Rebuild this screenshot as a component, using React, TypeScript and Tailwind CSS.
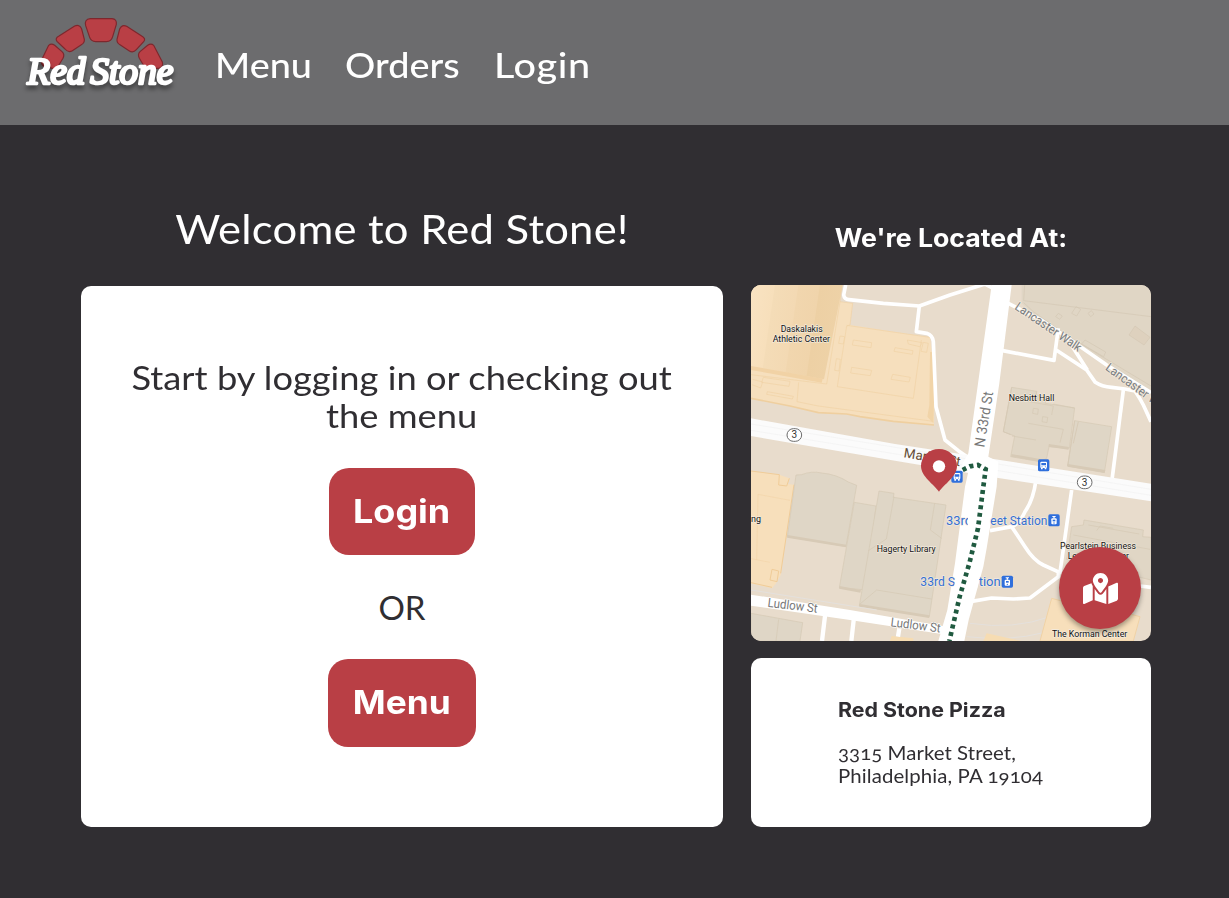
import { FaMapMarkedAlt } from 'react-icons/fa';

type LabelProps = {
  x: number;
  y: number;
  w: number;
  children: string;
  size?: number;
  color?: string;
  halo?: string;
  rotate?: number;
};

function Label({ x, y, w, children, size = 27, color = '#111111', halo = '#f3ebdf', rotate = 0 }: LabelProps) {
  return (
    <text
      x={x}
      y={y}
      textLength={w}
      lengthAdjust="spacingAndGlyphs"
      fontSize={size}
      fill={color}
      stroke={halo}
      strokeWidth={4}
      strokeLinejoin="round"
      paintOrder="stroke"
      transform={`rotate(${rotate} ${x} ${y})`}
    >
      {children}
    </text>
  );
}

function StationBadge({ x, y, tram = false }: { x: number; y: number; tram?: boolean }) {
  return (
    <g transform={`translate(${x} ${y})`}>
      <rect x="-17" y="-18" width="34" height="36" rx="5" fill="#2f6fdc" />
      {tram ? (
        <g fill="#fff">
          <path d="M-5 -13h10v3H2v4h-4v-4h-3z" />
          <rect x="-8" y="-6" width="16" height="18" rx="3" />
          <rect x="-4" y="-2" width="8" height="5" fill="#2f6fdc" />
          <circle cy="8" r="2" fill="#2f6fdc" />
        </g>
      ) : (
        <g fill="#fff">
          <rect x="-10" y="-11" width="20" height="19" rx="3" />
          <path d="M-8 7h5v5h-5zM3 7h5v5H3z" />
          <path d="M-7 -7H7V0H-7z" fill="#2f6fdc" />
          <circle cx="-5" cy="4" r="1.6" fill="#2f6fdc" />
          <circle cx="5" cy="4" r="1.6" fill="#2f6fdc" />
        </g>
      )}
    </g>
  );
}

function RouteShield({ x, y }: { x: number; y: number }) {
  return (
    <g>
      <rect x={x - 22} y={y - 19} width="44" height="38" rx="19" fill="#fff" stroke="#6c6c6c" strokeWidth="3" />
      <text x={x} y={y + 10} textAnchor="middle" fontSize="30" fill="#333">
        3
      </text>
    </g>
  );
}

function StreetMap() {
  return (
    <svg viewBox="3 15 1200 1068" className="block h-full w-full font-['Roboto',sans-serif]">
      <defs>
        <linearGradient id="gym" x1="0" x2="1" y1="0" y2="0.15">
          <stop offset="0" stopColor="#f9e3c2" />
          <stop offset="0.25" stopColor="#f7dfbb" />
          <stop offset="0.26" stopColor="#f4dcb7" />
          <stop offset="0.5" stopColor="#f3d9b3" />
          <stop offset="0.51" stopColor="#f1d6ae" />
          <stop offset="0.73" stopColor="#f0d4ab" />
          <stop offset="0.74" stopColor="#edd0a4" />
          <stop offset="1" stopColor="#eed2a7" />
        </linearGradient>
      </defs>
      <rect x="3" y="15" width="1200" height="1068" fill="#e8dccc" />

      {/* north-east block */}
      <path d="M815 15H1203V330L1140 295L1060 240L960 180L850 100L815 70Z" fill="#e0d6c5" />
      <g fill="none" stroke="#d3c7b4" strokeWidth="2">
        <path d="M824 15L821 62L1203 110M821 68L850 95L960 172L1060 232L1203 318" />
        <path d="M978 80l14 8l-12 20l-15-8zM925 100l12 8l-8 10l-12-8zM1024 92l8 10l-10 8l-8-10z" />
        <path d="M1005 180l62 36l-6 14l-66-38z" />
      </g>
      <path d="M1155 138L1200 172L1182 195L1137 165Z" fill="#ded1be" stroke="#d3c7b4" strokeWidth="2" />

      {/* athletic center */}
      <path d="M3 15H275L270 65L308 70L300 135L540 172L545 212L556 215L552 435L430 424L330 410L290 402L205 398L120 378L3 355Z" fill="#f6dfbd" />
      <path d="M3 355L120 378L205 398L290 402L330 410L430 424L552 435" fill="none" stroke="#efcf9f" strokeWidth="5" />
      <path d="M3 15H278L222 298L3 260Z" fill="url(#gym)" />
      <path d="M3 258L218 296L215 308L3 270Z" fill="#f1d2a5" />
      <g fill="none" stroke="#f0d2a5" strokeWidth="2">
        <path d="M275 15L270 65L230 312L3 284M270 65L308 70L300 135L290 138L262 320L490 355L514 180M290 136L540 172M146 307L141 365L205 378L550 424" />
        <path d="M310 180l55 8l-2 15l-56-8zM435 203l54 9l-2 11l-55-9zM305 262l60 9l-4 16l-59-8zM428 283l53 9l-4 14l-54-8z" />
        <path d="M270 168l14 2l-4 22l-14-2zM259 236l12 2l-4 35l-13-2zM472 180l45 8l-8 12l-34-8zM520 187l15 3l-5 27l-17-3z" />
        <path d="M40 292l80 12l-3 15l-82-12zM52 335l78 14l-3 8l-77-14zM8 298l30 8l-6 18l-26-10" />
      </g>
      <path d="M540 216L538 375L532 410L550 430L556 215Z" fill="#f1d4a8" />

      {/* west building */}
      <path d="M3 573L88 584L118 595L114 612L132 614L92 885L78 910L66 925L3 910Z" fill="#f7dfbb" />
      <g fill="none" stroke="#f0cc98" strokeWidth="3">
        <path d="M3 573L88 584L86 615L110 618L118 595M132 614L92 880M66 922L3 908M66 868l20 5l-5 32l-21-5z" />
        <path d="M24 643L20 840M24 643L120 661M3 836L60 847" strokeWidth="1" />
      </g>

      {/* grey campus buildings */}
      <g stroke="#d5c8b4" strokeWidth="2">
        <path d="M138 585L155 584Q185 572 215 579Q260 583 295 606L320 616L288 799L112 770Z" fill="#dfd6c6" />
        <path d="M313 667L378 678L350 930L268 923Z" fill="#dfd6c6" />
        <path d="M387 633L432 640L430 652L588 675L538 1010L328 977Z" fill="#dfd6c6" />
        <path d="M432 650L409 777L355 812M330 972L380 930L545 957M554 670L541 750L575 775" fill="none" />
        <path d="M785 322L860 334L858 345L888 350L886 370L974 384L958 505L897 500L890 535L870 545L782 530L794 468L760 455Z" fill="#e0d6c5" />
        <path d="M822 362L910 378L905 405M850 385l15 2l-2 16l-15-3zM878 410l15 2l-2 16l-15-3zM835 430L940 448L930 488M786 468L858 480M910 372L974 384" fill="none" />
        <path d="M974 422L1085 440L1063 578L953 558Z" fill="#dfd6c6" />
        <path d="M965 740L1000 735L1002 720L1180 750L1178 770L1203 772V900L950 838Z" fill="#e0d6c5" />
        <path d="M1015 735L1168 762M1040 752L1050 738L1090 745M970 765L1200 808" fill="none" />
        <path d="M3 1000L158 1028L150 1083H3ZM86 1018L78 1083" fill="#dfd6c6" />
      </g>
      <g fill="none" stroke="#d7cab6" strokeWidth="8">
        <path d="M112 769L288 798M268 922L332 934M328 976L538 1010M784 526L870 541M896 496L956 505M953 556L1065 574M955 836L1060 865" />
      </g>
      <path d="M785 322L760 455L782 464M860 334L858 362M974 422L965 480L953 558M985 425L970 490" fill="none" stroke="#d7cab6" strokeWidth="3" />

      {/* foot paths */}
      <g fill="none" stroke="#fff" strokeWidth="11" strokeLinejoin="round">
        <path d="M287 15L281 45Q283 58 297 59L400 70L508 78L600 45L705 12L740 30" />
        <path d="M508 78L499 155L530 160Q548 166 550 185L558 380L585 480L625 512L665 540" />
        <path d="M758 212L912 241L925 145M914 207L1010 270L1036 307Q1055 320 1085 322L1125 327L1155 333Q1170 355 1180 375L1203 425" />
        <path d="M945 165L1012 270M775 70L870 118L955 175L1070 255L1203 338" />
        <path d="M1120 330L1086 600" />
        <path d="M858 600Q850 660 825 695Q808 732 785 740L720 752M785 740L825 800Q850 840 880 855L930 878L965 630M925 878L925 890L840 954L790 957L725 954L665 964M1170 918L1203 922" />
      </g>
      <g fill="none" stroke="#e4e0dc" strokeWidth="3">
        <path d="M660 1030Q790 1050 900 1010L930 1000M650 1070Q780 1085 880 1058M3 930L380 990" />
      </g>
      <path d="M905 955L935 963L945 950L1170 1010L1150 1083H870Z" fill="#f7dfbb" stroke="#f0d2a5" strokeWidth="3" />
      <path d="M710 1060L815 1083H700ZM425 1068L490 1075V1083H420Z" fill="#f6dcb2" />

      {/* streets */}
      <path d="M3 415L435 492L745 539L1203 611V664L745 594L435 542L3 468Z" fill="#fbfbfb" />
      <path d="M3 432L640 535L1203 628M3 451L640 555L1203 646" fill="none" stroke="#f1f1f1" strokeWidth="2" />
      <path d="M3 944L300 990L590 1040V1064L300 1020L3 977Z" fill="#fff" />
      <path d="M226 1000L216 1083M312 1012L304 1083M448 1045L444 1070" stroke="#fff" strokeWidth="13" />
      <Label x={460} y={532} w={172} size={40} rotate={9} color="#654d36" halo="#fbfbfb">Market St</Label>
      <path d="M725 15H785L748 310L715 530L745 545L740 620L710 805L700 860L656 1020L643 1083H565L592 990L615 850L645 620L655 575L632 575L638 550L655 520Z" fill="#fff" />

      <Label x={92} y={157} w={126}>Daskalakis</Label>
      <Label x={68} y={186} w={172}>Athletic Center</Label>
      <Label x={776} y={363} w={137}>Nesbitt Hall</Label>
      <Label x={380} y={817} w={177}>Hagerty Library</Label>
      <Label x={3} y={727} w={30}>ng</Label>
      <Label x={930} y={808} w={228}>Pearlstein Business</Label>
      <Label x={953} y={837} w={184}>Learning Center</Label>
      <Label x={906} y={1070} w={226}>The Korman Center</Label>
      <Label x={703} y={503} w={168} size={43} rotate={-81} color="#777777" halo="#ffffff">N 33rd St</Label>
      <Label x={792} y={86} w={232} size={37} rotate={34} color="#777b80">Lancaster Walk</Label>
      <Label x={1064} y={268} w={232} size={37} rotate={36} color="#777b80">Lancaster Walk</Label>
      <Label x={52} y={980} w={150} size={38} rotate={7} color="#777777" halo="#ffffff">Ludlow St</Label>
      <Label x={421} y={1039} w={150} size={38} rotate={7} color="#777777" halo="#ffffff">Ludlow St</Label>
      <Label x={588} y={735} w={78} size={41} color="#356fd2">33rd</Label>
      <Label x={721} y={735} w={171} size={41} color="#356fd2">eet Station</Label>
      <Label x={511} y={918} w={104} size={41} color="#356fd2">33rd S</Label>
      <Label x={686} y={918} w={66} size={41} color="#356fd2">tion</Label>
      <path d="M655 690H722L707 805L675 760H652ZM622 875H693L680 930H610Z" fill="#fff" />

      <RouteShield x={133} y={465} />
      <RouteShield x={1004} y={607} />
      <StationBadge x={881} y={556} />
      <StationBadge x={621} y={590} />
      <StationBadge x={912} y={721} tram />
      <StationBadge x={772} y={905} tram />

      {/* walking route */}
      <path
        d="M638 570L660 559L684 555L707 568L700 620L684 745L658 850L629 950L598 1083"
        fill="none"
        stroke="#205a40"
        strokeWidth="14"
        strokeDasharray="12 11"
      />

      <path d="M567 635C552 613 513 590 513 558A54 51 0 0 1 621 558C621 590 582 613 567 635Z" fill="#b93f45" />
      <circle cx="567" cy="559" r="18.5" fill="#fff" />
    </svg>
  );
}

function Logo() {
  return (
    <svg viewBox="0 0 570 360" className="mt-[5px] block h-[120px] w-[190px] shrink-0">
      <g fill="#b93f45" stroke="#7e272d" strokeWidth="3.5">
        <path d="M241 41H306Q321 42 319 58L308 95Q304 110 289 110H257Q243 109 239 97L227 62Q222 43 241 41Z" />
        <path d="M147 93L194 63Q209 57 215 72L223 103Q224 114 214 119L187 137Q175 144 165 132L141 109Q134 100 147 93Z" />
        <path d="M395 93L350 64Q336 57 329 72L321 103Q320 114 330 119L357 137Q369 145 379 134L401 110Q409 101 395 93Z" />
        <path d="M116 121Q124 114 134 121L156 140Q165 148 159 160L143 186Q138 193 127 190L103 185Q91 178 95 164Z" />
        <path d="M431 121Q423 114 413 121L390 140Q382 148 388 160L402 183Q407 190 418 190H447Q461 185 457 171Z" />
      </g>
      <text
        x="52"
        y="236"
        textLength="438"
        lengthAdjust="spacingAndGlyphs"
        fontSize="112"
        fontStyle="italic"
        wordSpacing="-14"
        fill="#fff"
        stroke="#fff"
        strokeWidth="8"
        strokeLinejoin="round"
        className="font-['Liberation_Serif',serif] drop-shadow-[0_12px_6px_rgba(0,0,0,0.4)]"
      >
        Red Stone
      </text>
    </svg>
  );
}

export default function App() {
  return (
    <div className="flex h-[898px] w-full flex-col overflow-hidden bg-[#302e32] font-['Lato',sans-serif]">
      <header className="flex h-[125px] shrink-0 items-center bg-[#6c6c6e] pl-[10px] text-white">
        <Logo />
        <nav className="flex items-center pt-[3px] pl-[15px] text-[35px] leading-[42px] font-medium">
          <a href="#menu" className="w-[130px] origin-left scale-x-[1.08]">Menu</a>
          <a href="#orders" className="w-[149px] origin-left scale-x-[1.08]">Orders</a>
          <a href="#login" className="origin-left scale-x-[1.13] tracking-[0.5px]">Login</a>
        </nav>
      </header>

      <main className="flex gap-7 pl-[81px]">
        <section className="flex w-[642px] flex-col">
          <h1 className="flex h-[161px] scale-x-[1.09] items-end justify-center pb-[32px] text-[40px] leading-[50px] tracking-[0.2px] text-white">
            Welcome to Red Stone!
          </h1>
          <div className="flex h-[541px] flex-col items-center rounded-[10px] bg-white pt-[72px] text-[#302e32]">
            <p className="scale-x-[1.1] text-center text-[33px] leading-[38px]">
              Start by logging in or checking out
              <br />
              the menu
            </p>
            <button className="mt-[34px] flex h-[87px] w-[146px] items-center justify-center rounded-[20px] bg-[#b93f45] pt-px font-['Inter',sans-serif] text-[33px] font-bold text-white">
              <span className="scale-x-[1.09]">Login</span>
            </button>
            <p className="my-[33px] text-[33px] leading-[38px]">OR</p>
            <button className="flex h-[88px] w-[148px] items-center justify-center rounded-[20px] bg-[#b93f45] font-['Inter',sans-serif] text-[33px] font-bold text-white">
              <span className="scale-x-[1.07]">Menu</span>
            </button>
          </div>
        </section>

        <section className="flex w-[400px] flex-col">
          <h2 className="flex h-[160px] scale-x-[1.067] items-end justify-center pb-[32px] font-['Inter',sans-serif] text-[25px] leading-[30px] font-bold text-white">
            We're Located At:
          </h2>
          <div className="relative h-[356px] overflow-hidden rounded-[10px]">
            <StreetMap />
            <button
              aria-label="Open map"
              className="absolute right-[10px] bottom-[12px] flex h-[82px] w-[82px] items-center justify-center rounded-full bg-[#b93f45] text-[35px] text-white shadow-[0_3px_5px_rgba(0,0,0,0.35)]"
            >
              <FaMapMarkedAlt />
            </button>
          </div>
          <div className="mt-[17px] flex h-[169px] flex-col rounded-[10px] bg-white pt-[41px] pl-[87px] text-[20px] leading-[23px] text-[#302e32]">
            <h3 className="mb-[19px] origin-left scale-x-[1.07] font-['Inter',sans-serif] font-bold">Red Stone Pizza</h3>
            <p className="origin-left scale-x-[1.02] tracking-[0.05px] oldstyle-nums">
              3315 Market Street,
              <br />
              <span className="tracking-[0.1px]">Philadelphia, PA 19104</span>
            </p>
          </div>
        </section>
      </main>
    </div>
  );
}
